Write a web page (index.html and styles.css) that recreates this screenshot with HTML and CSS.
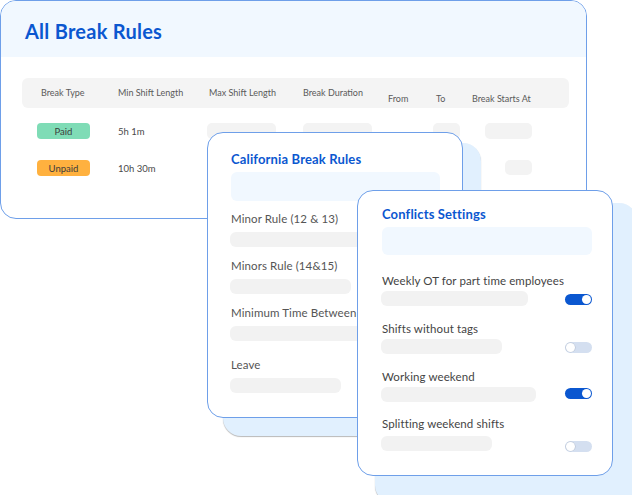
FILE: index.html
```html
<!DOCTYPE html>
<html>
<head>
<meta charset="utf-8">
<link rel="stylesheet" href="styles.css">
</head>
<body>
<div class="stage">
  <section class="card main">
    <header class="main-head"><h1 class="title-lg">All Break Rules</h1></header>
    <div class="table">
      <div class="thead">
        <div class="th">Break Type</div>
        <div class="th">Min Shift Length</div>
        <div class="th">Max Shift Length</div>
        <div class="th">Break Duration</div>
        <div class="th low">From</div>
        <div class="th low">To</div>
        <div class="th low">Break Starts At</div>
      </div>
      <div class="trow r1">
        <div class="td"><span class="badge paid">Paid</span></div>
        <div class="td txt">5h 1m</div>
        <div class="td"><span class="ph ph-max"></span></div>
        <div class="td"><span class="ph ph-dur"></span></div>
        <div class="td"></div>
        <div class="td"><span class="ph ph-to"></span></div>
        <div class="td"><span class="ph ph-start"></span></div>
      </div>
      <div class="trow r2">
        <div class="td"><span class="badge unpaid">Unpaid</span></div>
        <div class="td txt">10h 30m</div>
        <div class="td"></div>
        <div class="td"></div>
        <div class="td"></div>
        <div class="td"></div>
        <div class="td"><span class="ph ph-start2"></span></div>
      </div>
    </div>
  </section>

  <div class="backdrop back-ca"></div>
  <section class="card panel ca">
    <h2 class="title-sm">California Break Rules</h2>
    <div class="input"></div>
    <div class="field f1"><div class="label">Minor Rule (12 &amp; 13)</div><div class="bar w-long"></div></div>
    <div class="field"><div class="label">Minors Rule (14&amp;15)</div><div class="bar w121"></div></div>
    <div class="field"><div class="label">Minimum Time Between Shifts</div><div class="bar w-long"></div></div>
    <div class="field f4"><div class="label">Leave</div><div class="bar w111"></div></div>
  </section>

  <div class="backdrop back-cf"></div>
  <section class="card panel cf">
    <h2 class="title-sm">Conflicts Settings</h2>
    <div class="input"></div>
    <div class="setting s1">
      <div class="label">Weekly OT for part time employees</div>
      <div class="setting-row"><div class="bar w147"></div><span class="toggle on"></span></div>
    </div>
    <div class="setting">
      <div class="label">Shifts without tags</div>
      <div class="setting-row"><div class="bar w121"></div><span class="toggle"></span></div>
    </div>
    <div class="setting">
      <div class="label">Working weekend</div>
      <div class="setting-row"><div class="bar w155"></div><span class="toggle on up"></span></div>
    </div>
    <div class="setting s4">
      <div class="label">Splitting weekend shifts</div>
      <div class="setting-row"><div class="bar w111"></div><span class="toggle down"></span></div>
    </div>
  </section>
</div>
</body>
</html>
```

FILE: styles.css
```css
* { box-sizing: border-box; margin: 0; padding: 0; }
html, body { background: #ffffff; }
body {
  font-family: "Lato", "Noto Sans", "Liberation Sans", sans-serif;
  color: #4a4a4a;
}
.stage {
  position: relative;
  width: 632px;
  height: 495px;
  overflow: hidden;
  background: #fff;
}
.card {
  position: absolute;
  background: #fff;
  border: 1px solid #6e9fe9;
  border-radius: 16px;
  overflow: hidden;
}
.main {
  left: 0; top: 0;
  width: 587px; height: 219px;
}
.main-head {
  height: 56px;
  background: #f1f8ff;
  padding: 17px 0 0 24px;
}
.title-lg {
  font-size: 20px;
  font-weight: 700;
  color: #0b57d0;
  line-height: 26px;
  letter-spacing: 0.25px;
}
.table { padding: 21px 17px 0 21px; }
.thead, .trow {
  display: grid;
  grid-template-columns: 77px 91px 94px 85px 48px 36px 1fr;
}
.thead {
  height: 30px;
  background: #f4f4f4;
  border-radius: 6px;
  padding-left: 19px;
  font-size: 9px;
  color: #5a5a5a;
}
.th { align-self: center; line-height: 12px; padding-bottom: 1px; white-space: nowrap; }
.th.low { align-self: end; padding-bottom: 3px; }
.trow { padding-left: 19px; align-items: center; font-size: 9.5px; color: #4a4a4a; }
.r1 { margin-top: 15px; height: 16px; }
.r2 { margin-top: 21px; height: 16px; }
.td { height: 16px; display: flex; align-items: center; }
.badge {
  margin-left: -4px;
  width: 53px; height: 16px;
  border-radius: 4px;
  font-size: 9.5px;
  display: flex; align-items: center; justify-content: center;
  color: #3c3c3c;
}
.paid { background: #7fdcb6; }
.unpaid { background: #ffb13f; }
.ph { display: block; height: 16px; background: #f3f3f3; border-radius: 5px; }
.ph-max { width: 69px; margin-left: -2px; }
.ph-dur { width: 69px; }
.ph-to { width: 27px; margin-left: -3px; }
.ph-start { width: 47px; margin-left: 13px; }
.ph-start2 { width: 27px; height: 15px; margin-left: 33px; margin-top: -2px; }

.backdrop {
  position: absolute;
  background: #e1f0fe;
  border-radius: 18px;
  box-shadow: 0 1px 1px rgba(0,0,0,0.28);
}
.back-ca { left: 223px; top: 143px; width: 258px; height: 293px; }
.back-cf { left: 375px; top: 203px; width: 262px; height: 300px; }

.panel { padding: 0 20px 0 23px; }
.ca { left: 207px; top: 132px; width: 256px; height: 286px; }
.cf { left: 357px; top: 190px; width: 256px; height: 286px; padding-left: 24px; }
.title-sm {
  font-size: 13px;
  font-weight: 700;
  color: #0b57d0;
  line-height: 18px;
  margin-top: 17px;
  letter-spacing: 0.15px;
}
.cf .title-sm { margin-top: 14px; }
.input {
  height: 29px;
  width: 209px;
  background: #f1f8ff;
  border-radius: 6px;
  margin-top: 4px;
}
.cf .input { margin-top: 4px; height: 28px; width: 210px; }
.label {
  font-size: 11.5px;
  line-height: 16px;
  color: #555;
  white-space: nowrap;
  letter-spacing: 0.1px;
}
.bar { height: 15px; background: #f2f2f2; border-radius: 6px; margin-left: -1px; }
.field { margin-top: 11px; }
.field.f1 { margin-top: 10px; }
.field.f4 { margin-top: 16px; }
.field .label { margin-bottom: 5px; }
.w-long { width: 200px; }
.w121 { width: 121px; }
.w111 { width: 111px; }
.w147 { width: 147px; }
.w155 { width: 155px; }

.setting { margin-top: 15px; }
.setting.s1 { margin-top: 18px; }
.setting.s4 { margin-top: 14px; }
.setting .label { color: #444; margin-bottom: 2px; }
.setting-row {
  display: flex;
  align-items: center;
  justify-content: space-between;
  width: 210px;
}
.toggle {
  position: relative;
  display: block;
  width: 27px; height: 11px;
  border-radius: 6px;
  background: #d4dff0;
  margin-top: 2px;
}
.toggle::after {
  content: "";
  position: absolute;
  top: 1px; left: 1px;
  width: 9px; height: 9px;
  border-radius: 50%;
  background: #fff;
  box-shadow: 0 0 0 0.6px #b9c3d3;
}
.toggle.on { background: #0b57d0; }
.toggle.on::after { left: 17px; box-shadow: none; }
.toggle.up { margin-top: -2px; }
.toggle.down { margin-top: 7px; }
```
